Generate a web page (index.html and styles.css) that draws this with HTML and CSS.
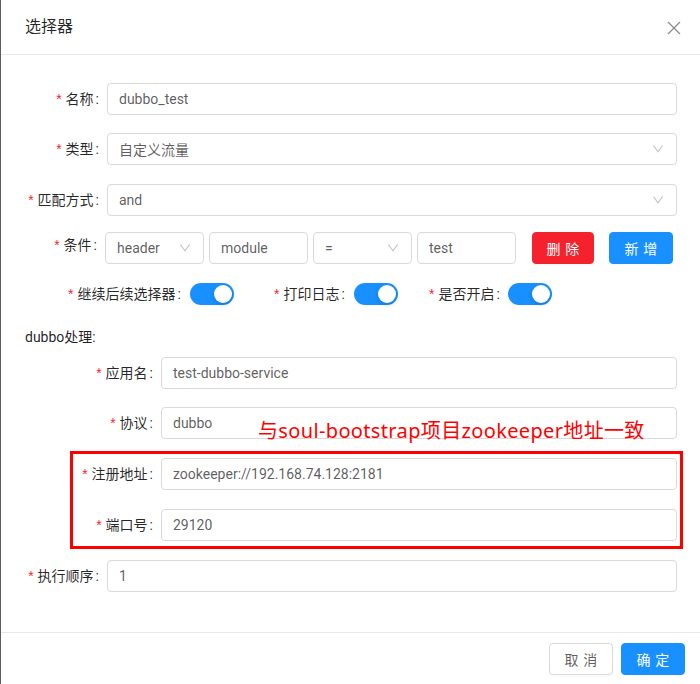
FILE: index.html
```html
<!DOCTYPE html>
<html lang="zh-CN">
<head>
<meta charset="utf-8">
<title>选择器</title>
<link rel="stylesheet" href="styles.css">
</head>
<body>
<div class="modal">
  <div class="modal-header">
    <span class="modal-title">选择器</span>
    <span class="modal-close">
      <svg width="14" height="14" viewBox="0 0 14 14"><path d="M1 1L13 13M13 1L1 13" stroke="#8c8c8c" stroke-width="1.3" fill="none"/></svg>
    </span>
  </div>

  <div class="modal-body">
    <div class="row gap-18">
      <label class="lbl w82"><span class="req">*</span>名称<span class="colon">:</span></label>
      <div class="input">dubbo_test</div>
    </div>

    <div class="row gap-19">
      <label class="lbl w82"><span class="req">*</span>类型<span class="colon">:</span></label>
      <div class="input select">自定义流量
        <svg class="arrow" viewBox="64 64 896 896" width="12" height="12"><path d="M884 256h-75c-5.1 0-9.9 2.5-12.9 6.6L512 654.2 227.9 262.6c-3-4.1-7.8-6.6-12.9-6.6h-75c-6.5 0-10.3 7.4-6.5 12.7l352.6 486.1c12.8 17.6 39 17.6 51.7 0l352.6-486.1c3.9-5.3.1-12.7-6.4-12.7z"/></svg>
      </div>
    </div>

    <div class="row gap-16">
      <label class="lbl w82"><span class="req">*</span>匹配方式<span class="colon">:</span></label>
      <div class="input select">and
        <svg class="arrow" viewBox="64 64 896 896" width="12" height="12"><path d="M884 256h-75c-5.1 0-9.9 2.5-12.9 6.6L512 654.2 227.9 262.6c-3-4.1-7.8-6.6-12.9-6.6h-75c-6.5 0-10.3 7.4-6.5 12.7l352.6 486.1c12.8 17.6 39 17.6 51.7 0l352.6-486.1c3.9-5.3.1-12.7-6.4-12.7z"/></svg>
      </div>
    </div>

    <div class="row gap-14">
      <label class="lbl w80 lbl-up"><span class="req">*</span>条件<span class="colon">:</span></label>
      <div class="cond">
        <div class="input select cell">header
          <svg class="arrow" viewBox="64 64 896 896" width="12" height="12"><path d="M884 256h-75c-5.1 0-9.9 2.5-12.9 6.6L512 654.2 227.9 262.6c-3-4.1-7.8-6.6-12.9-6.6h-75c-6.5 0-10.3 7.4-6.5 12.7l352.6 486.1c12.8 17.6 39 17.6 51.7 0l352.6-486.1c3.9-5.3.1-12.7-6.4-12.7z"/></svg>
        </div>
        <div class="input cell">module</div>
        <div class="input select cell">=
          <svg class="arrow" viewBox="64 64 896 896" width="12" height="12"><path d="M884 256h-75c-5.1 0-9.9 2.5-12.9 6.6L512 654.2 227.9 262.6c-3-4.1-7.8-6.6-12.9-6.6h-75c-6.5 0-10.3 7.4-6.5 12.7l352.6 486.1c12.8 17.6 39 17.6 51.7 0l352.6-486.1c3.9-5.3.1-12.7-6.4-12.7z"/></svg>
        </div>
        <div class="input cell">test</div>
        <button class="btn btn-danger btn-del"><span class="sp">删除</span></button>
        <button class="btn btn-primary btn-add"><span class="sp">新增</span></button>
      </div>
    </div>

    <div class="row sw-row gap-16">
      <div class="sw-item">
        <label class="lbl sw-l1"><span class="req">*</span>继续后续选择器<span class="colon">:</span></label>
        <span class="switch"><span class="knob"></span></span>
      </div>
      <div class="sw-item sw-2">
        <label class="lbl sw-l2"><span class="req">*</span>打印日志<span class="colon">:</span></label>
        <span class="switch"><span class="knob"></span></span>
      </div>
      <div class="sw-item sw-3">
        <label class="lbl sw-l3"><span class="req">*</span>是否开启<span class="colon">:</span></label>
        <span class="switch"><span class="knob"></span></span>
      </div>
    </div>

    <div class="section-title">dubbo处理:</div>

    <div class="row gap-18">
      <label class="lbl w136"><span class="req">*</span>应用名<span class="colon">:</span></label>
      <div class="input">test-dubbo-service</div>
    </div>

    <div class="row gap-12 anno-host">
      <label class="lbl w136"><span class="req">*</span>协议<span class="colon">:</span></label>
      <div class="input">dubbo</div>
      <span class="annotation">与soul-bootstrap项目zookeeper地址一致</span>
    </div>

    <div class="mark-box">
      <div class="row gap-19">
        <label class="lbl w88"><span class="req">*</span>注册地址<span class="colon">:</span></label>
        <div class="input">zookeeper://192.168.74.128:2181</div>
      </div>
      <div class="row">
        <label class="lbl w88"><span class="req">*</span>端口号<span class="colon">:</span></label>
        <div class="input">29120</div>
      </div>
    </div>

    <div class="row">
      <label class="lbl w82"><span class="req">*</span>执行顺序<span class="colon">:</span></label>
      <div class="input">1</div>
    </div>
  </div>

  <div class="modal-footer">
    <button class="btn btn-default"><span class="sp">取消</span></button>
    <button class="btn btn-primary"><span class="sp">确定</span></button>
  </div>
</div>
</body>
</html>
```

FILE: styles.css
```css
* { box-sizing: border-box; }

html, body {
  margin: 0;
  padding: 0;
  background: #fff;
}

body {
  font-family: Roboto, "Noto Sans CJK SC", sans-serif;
  font-size: 14px;
  color: rgba(0, 0, 0, 0.85);
}

.modal {
  width: 700px;
  height: 684px;
  border-left: 1px solid #5c5c5c;
  background: #fff;
  overflow: hidden;
}

.modal-header {
  height: 55px;
  padding: 0 19px 0 24px;
  border-bottom: 1px solid #e8e8e8;
  display: flex;
  align-items: center;
  justify-content: space-between;
}

.modal-title {
  font-size: 16px;
  line-height: 22px;
  color: rgba(0, 0, 0, 0.85);
}

.modal-close {
  display: flex;
  width: 14px;
  height: 14px;
  margin-top: 2px;
}

.modal-body {
  padding: 28px 23px 0 24px;
  height: 577px;
  display: flex;
  flex-direction: column;
}

.row {
  display: flex;
  align-items: center;
  height: 32px;
  flex-shrink: 0;
}

.gap-12 { margin-bottom: 12px; }
.gap-14 { margin-bottom: 14px; }
.gap-16 { margin-bottom: 16px; }
.gap-18 { margin-bottom: 18px; }
.gap-19 { margin-bottom: 19px; }

.lbl {
  display: flex;
  justify-content: flex-end;
  align-items: center;
  flex-shrink: 0;
  white-space: nowrap;
  color: rgba(0, 0, 0, 0.85);
  line-height: 22px;
}

.w80 { width: 80px; }
.w82 { width: 82px; }
.w88 { width: 88px; }
.w136 { width: 136px; }

.lbl-up { align-self: flex-start; padding-top: 2px; }

.req {
  color: #f5222d;
  font-family: "Liberation Sans", sans-serif;
  font-size: 14px;
  margin-right: 4px;
  line-height: 1;
}

.colon {
  margin: 0 8px 0 2px;
}

.input {
  flex: 1;
  height: 32px;
  border: 1px solid #d9d9d9;
  border-radius: 4px;
  padding: 0 11px;
  display: flex;
  align-items: center;
  color: rgba(0, 0, 0, 0.65);
  position: relative;
  background: #fff;
}

.select .arrow {
  position: absolute;
  right: 12px;
  top: 50%;
  margin-top: -6px;
  fill: rgba(0, 0, 0, 0.25);
}

.cond {
  display: flex;
  align-items: center;
  flex: 1;
  height: 32px;
}

.cond .cell {
  flex: 0 0 99px;
  margin-right: 5px;
}

.cond .cell:nth-child(4) { margin-right: 16px; }

.btn {
  height: 32px;
  border-radius: 4px;
  border: 1px solid transparent;
  font-family: Roboto, "Noto Sans CJK SC", sans-serif;
  font-size: 14px;
  padding: 0;
  display: inline-flex;
  align-items: center;
  justify-content: center;
  flex-shrink: 0;
  box-shadow: 0 2px 0 rgba(0, 0, 0, 0.015);
}

.sp {
  letter-spacing: 0.34em;
  margin-right: -0.34em;
}

.btn-danger {
  background: #f5222d;
  border-color: #f5222d;
  color: #fff;
}

.btn-primary {
  background: #1890ff;
  border-color: #1890ff;
  color: #fff;
  width: 64px;
}

.btn-default {
  background: #fff;
  border-color: #d9d9d9;
  color: rgba(0, 0, 0, 0.65);
  width: 64px;
}

.btn-del { width: 62px; margin-right: 15px; }
.btn-add { width: 64px; }

.sw-row {
  padding-left: 43px;
}

.sw-item {
  display: flex;
  align-items: center;
}

.sw-2 { margin-left: 40px; }
.sw-3 { margin-left: 31px; }

.sw-l1 { width: 122px; justify-content: flex-start; }
.sw-l2 { width: 80px; justify-content: flex-start; }
.sw-l3 { width: 79px; justify-content: flex-start; }

.switch {
  width: 44px;
  height: 22px;
  border-radius: 11px;
  background: #1890ff;
  position: relative;
  display: inline-block;
  flex-shrink: 0;
}

.knob {
  position: absolute;
  top: 2px;
  right: 2px;
  width: 18px;
  height: 18px;
  border-radius: 50%;
  background: #fff;
  box-shadow: 0 2px 4px 0 rgba(0, 35, 11, 0.2);
}

.section-title {
  height: 22px;
  line-height: 22px;
  margin-bottom: 9px;
  font-weight: 400;
  color: rgba(0, 0, 0, 0.88);
  flex-shrink: 0;
}

.anno-host {
  position: relative;
}

.annotation {
  position: absolute;
  left: 233px;
  top: 12px;
  font-size: 20px;
  line-height: 24px;
  letter-spacing: 0.35px;
  color: #ff0000;
  white-space: nowrap;
  font-family: "Noto Sans", "Noto Sans CJK SC", sans-serif;
}

.mark-box {
  border: 3px solid #ff0000;
  margin: 0 -6px 11px 45px;
  padding: 4px 3px 5px 0;
  flex-shrink: 0;
}

.modal-footer {
  border-top: 1px solid #e8e8e8;
  padding: 10px 15px;
  display: flex;
  justify-content: flex-end;
  gap: 8px;
}
```
